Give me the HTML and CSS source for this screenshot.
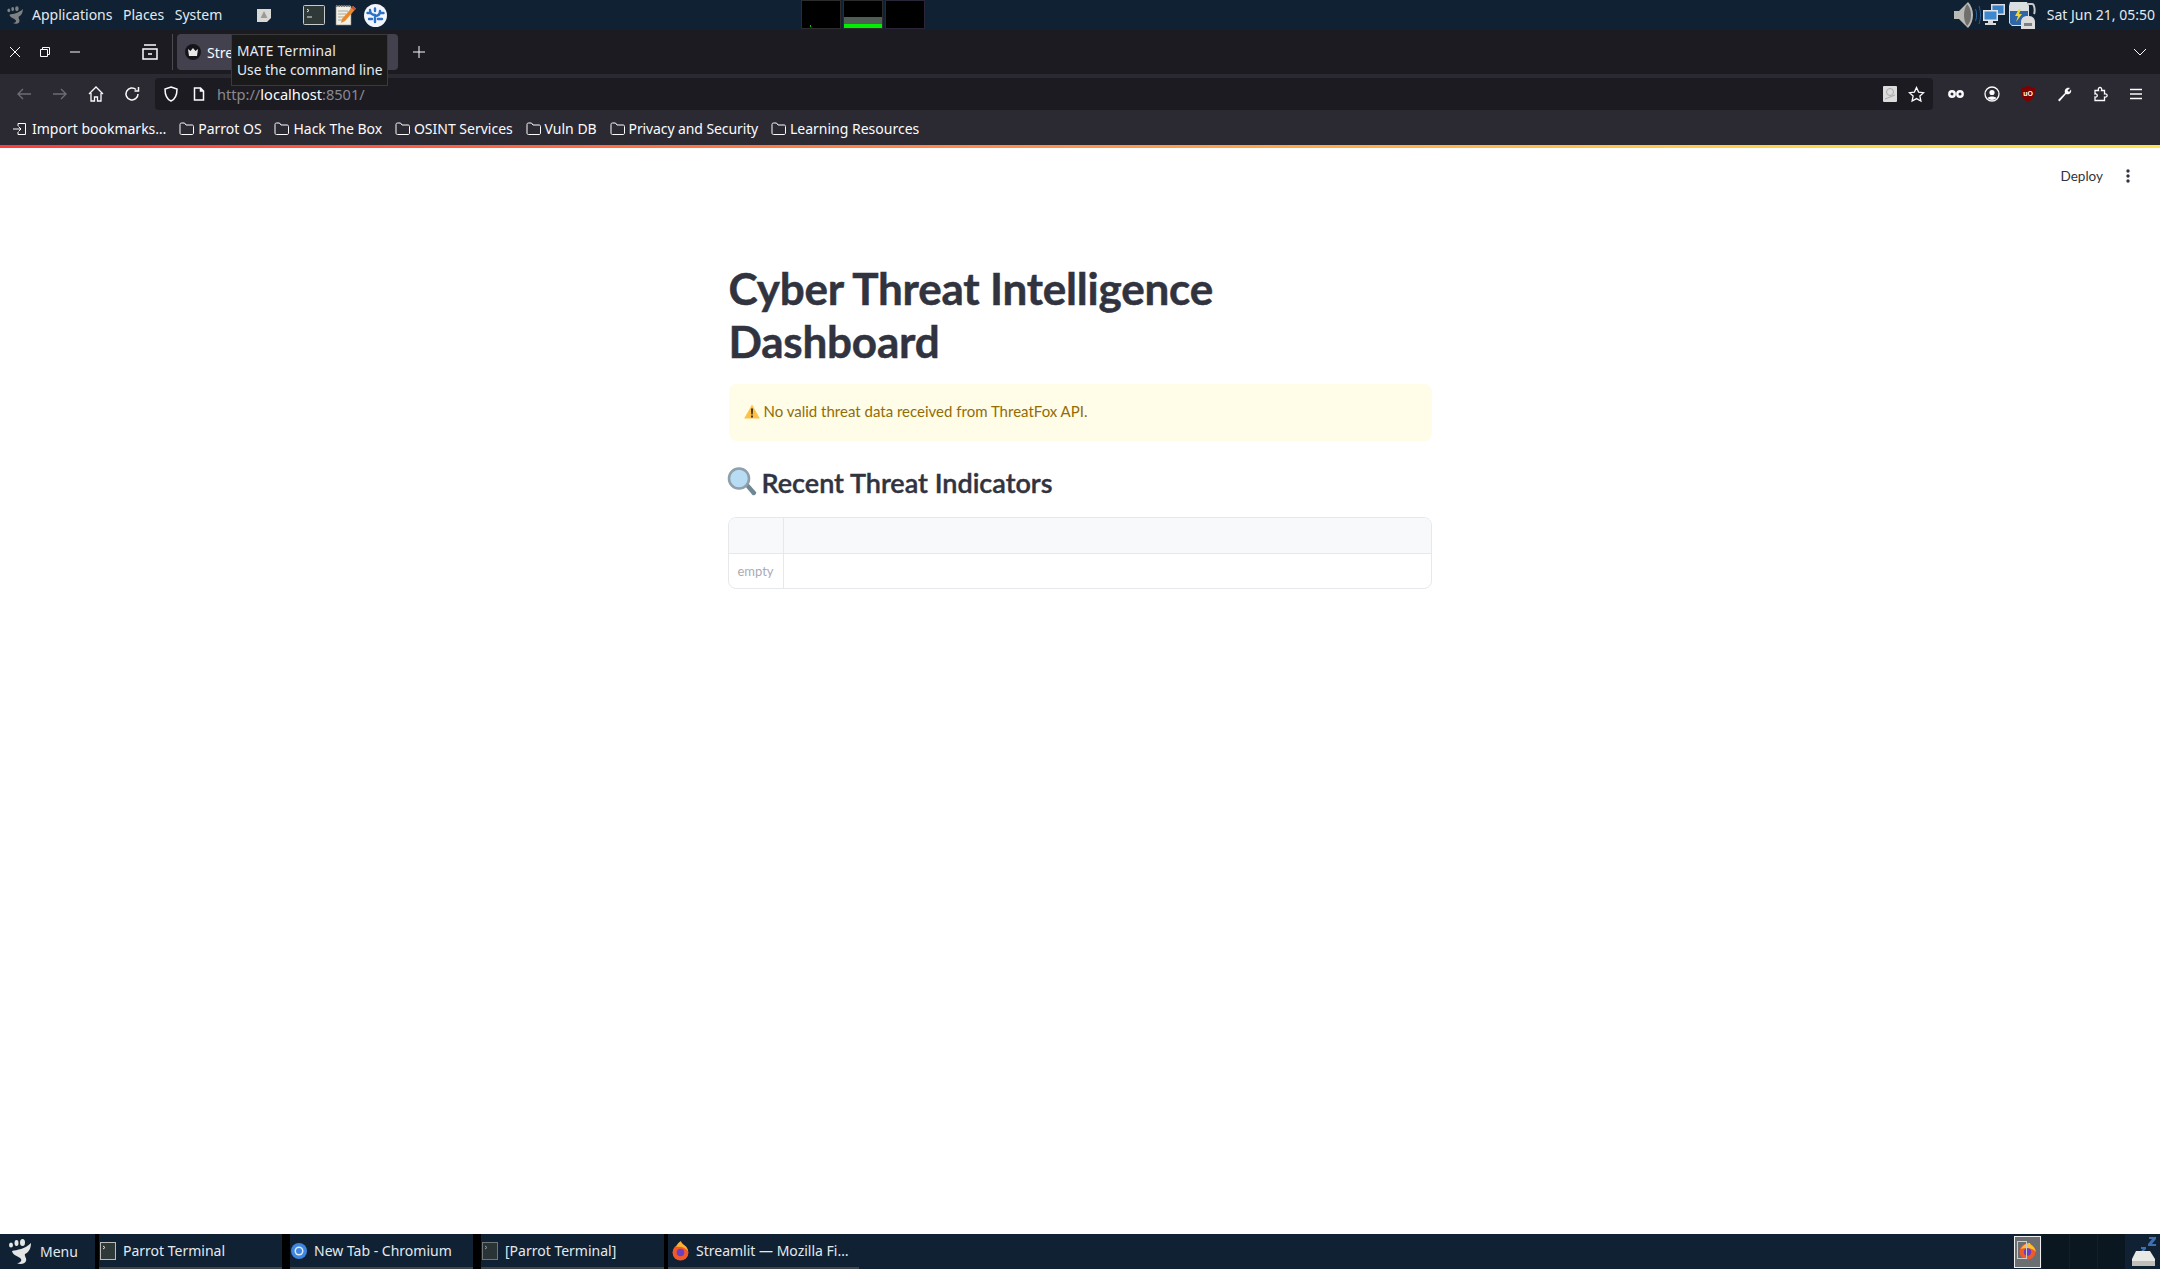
FILE: index.html
```html
<!DOCTYPE html>
<html lang="en">
<head>
<meta charset="utf-8">
<title>Streamlit</title>
<link rel="stylesheet" href="styles.css">
</head>
<body>
<header class="panel">
  <svg class="p-parrot" width="19" height="24" viewBox="0 0 27 27"><g fill="#7d8182"><path d="M5 13C10 12 18 11 24 5c0 5-2 9-6 11-1 2 2 4 1 7-1 3-6 4-9 2 3 0 5-2 4-4-2-3-8-3-9-8z"/><ellipse cx="4" cy="7" rx="2" ry="2.600"/><ellipse cx="9.500" cy="5" rx="2" ry="3"/><ellipse cx="15.500" cy="4.500" rx="2.500" ry="3.500"/></g></svg>
  <nav class="p-menu"><span>Applications</span><span>Places</span><span>System</span></nav>
  <svg class="p-note" width="18" height="18" viewBox="0 0 18 18"><path d="M2 3h14v9l-4 4H2z" fill="#d8d8d4"/><path d="M9 5l3.400 7H5.600z" fill="#9a9a98"/></svg>
  <svg class="p-term" width="22" height="20" viewBox="0 0 22 20"><rect x=".5" y=".5" width="21" height="19" rx="1" fill="#2f3a38" stroke="#c8cbc8"/><path d="M4 4l2 1.500L4 7M4 12h5" stroke="#e8e8e8" fill="none"/></svg>
  <svg class="p-pad" width="22" height="22" viewBox="0 0 22 22"><path d="M2 2h15v19H2z" fill="#f1efe6" stroke="#888" stroke-width=".6"/><path d="M2 2h15" stroke="#777" stroke-width="2" stroke-dasharray="1.500 1"/><path d="M4 7h10M4 10h8M4 13h6M4 16h7" stroke="#a9a9a0"/><path d="M19 2l3 2.500L11 17l-4 2 1-4z" fill="#e8892b"/><path d="M19 2l3 2.500-1.500 2-3-2.500z" fill="#c8503a"/></svg>
  <svg class="p-vs" width="23" height="23" viewBox="0 0 23 23"><circle cx="11.500" cy="11.500" r="11.500" fill="#f2f5fa"/><path d="M11 18V11M11 11C8 11 6 9 6 6M11 12c3 0 5-1.500 5-5M6 9H3.500M16 9h3.500M11 7V4.500M14 15h4M8 15H5" stroke="#2b70c9" stroke-width="2.400" fill="none" stroke-linecap="round"/></svg>
  <div class="monitors">
    <div class="mon"><i class="mon-dot"></i></div>
    <div class="mon mon-mem"><i class="mon-grey"></i><i class="mon-green"></i></div>
    <div class="mon mon-net"></div>
  </div>
  <div class="p-tray">
    <svg width="30" height="28" viewBox="0 0 30 28"><path d="M2 10h5L16 1c3 3 5 8 5 13s-2 10-5 13l-9-9H2z" fill="#b9b9b5"/><path d="M15 3c3 3 4 7 4 11s-1 8-4 11c-2-3-3-7-3-11s1-8 3-11z" fill="#6f6f6d"/><path d="M23.500 8c1.500 4 1.500 8 0 12M27 5c2 6 2 12 0 18" stroke="#2f5f93" fill="none"/></svg>
    <svg width="24" height="24" viewBox="0 0 24 24"><rect x="9" y="1" width="14" height="11" fill="#d5dbe0"/><rect x="10.500" y="2.500" width="11" height="8" fill="#3b7fc4"/><rect x="1" y="7" width="15" height="11" fill="#e3e6e8"/><rect x="2.500" y="8.500" width="12" height="8" fill="#3f88cf"/><path d="M6 18h5v2h3v2H3v-2h3z" fill="#d8d8d8"/></svg>
    <svg class="tray-batt" width="32" height="30" viewBox="0 0 32 30"><path d="M3 2h17l2 4v17l-3 3H5l-3-3V6z" fill="#d9dee2"/><path d="M3 11h18v12l-2 2H5l-2-2z" fill="#2f66a8"/><path d="M21 4h4c3 0 3 8 2 10" stroke="#c8c8c8" stroke-width="2" fill="none"/><path d="M12 9l-4 7h3l-2 6 6-8h-3l2-5z" fill="#f1d63a"/><path d="M14 22c0-4 3-6 6-6h2c3 0 6 2 6 6v7H14z" fill="#dcdcdc"/><rect x="17" y="23" width="8" height="3" fill="#7f7f7f"/></svg>
    <time class="p-clock">Sat Jun 21, 05:50</time>
  </div>
</header>

<section class="tabbar">
  <span class="slot30"><svg width="14" height="14" viewBox="0 0 14 14"><path d="M2 2l10 10M12 2L2 12" class="st"/></svg></span>
  <span class="slot30"><svg width="12" height="12" viewBox="0 0 12 12"><path d="M1.500 3.500h7v7h-7zM3.500 3.500v-2h7v7h-2" class="st"/></svg></span>
  <span class="slot30"><svg width="12" height="12" viewBox="0 0 12 12"><path d="M1 6h10" class="st"/></svg></span>
  <span class="slot30 tabsview"><svg width="18" height="18" viewBox="0 0 18 18"><path d="M3 2h12M2 6h14v10H2zM7 11h4" class="st st15"/></svg></span>
  <span class="sep"></span>
  <div class="tab">
    <span class="favicon"><svg width="10" height="8" viewBox="0 0 10 8"><path d="M0 1l2.500 2L5 0l2.500 3L10 1 9 8H1z" fill="#e8e8e8"/></svg></span>
    <span>Streamlit</span>
  </div>
  <span class="slot30 plus"><svg width="14" height="14" viewBox="0 0 14 14"><path d="M7 1v12M1 7h12" class="st"/></svg></span>
  <span class="slot30 chev"><svg width="14" height="8" viewBox="0 0 14 8"><path d="M1 1l6 6 6-6" class="st"/></svg></span>
</section>

<section class="navbar">
  <span class="slot36"><svg width="16" height="14" viewBox="0 0 16 14"><path d="M15 7H2M7 2L2 7l5 5" class="st dim"/></svg></span>
  <span class="slot36"><svg width="16" height="14" viewBox="0 0 16 14"><path d="M1 7h13M9 2l5 5-5 5" class="st dim"/></svg></span>
  <span class="slot36"><svg width="16" height="16" viewBox="0 0 16 16"><path d="M1 8l7-7 7 7M3 7v8h3.500v-4h3v4H13V7" class="st st13"/></svg></span>
  <span class="slot36"><svg width="16" height="16" viewBox="0 0 16 16"><path d="M14 8a6 6 0 1 1-2-4.500M14.500 1v4h-4" class="st st15"/></svg></span>
  <div class="urlbar">
    <svg class="u-shield" width="16" height="16" viewBox="0 0 16 16"><path d="M8 1l6 2c0 6-1 10-6 12C3 13 2 9 2 3z" class="st st15"/></svg>
    <svg class="u-page" width="12" height="14" viewBox="0 0 12 14"><path d="M1.500 1h6l3 3v9h-9zM7.500 1v3h3" class="st st15"/></svg>
    <span class="u-text"><span class="u-dim">http://</span>localhost<span class="u-dim">:8501/</span></span>
    <svg class="u-disk" width="14" height="16" viewBox="0 0 14 16"><rect width="14" height="16" rx="1" fill="#dcdcdc"/><circle cx="7" cy="6" r="3.500" fill="none" stroke="#a8a8a8"/><path d="M2 13l10-4" stroke="#a8a8a8"/></svg>
    <svg class="u-star" width="17" height="17" viewBox="0 0 17 17"><path d="M8.500 1.500l2.100 4.600 5 .6-3.700 3.400 1 5-4.400-2.500-4.400 2.500 1-5L1.400 6.700l5-.6z" class="st st13"/></svg>
  </div>
  <span class="slot36"><svg width="16" height="8" viewBox="0 0 16 8"><circle cx="4" cy="4" r="2.700" fill="none" stroke="#fbfbfe" stroke-width="2.400"/><circle cx="12" cy="4" r="2.700" fill="none" stroke="#fbfbfe" stroke-width="2.400"/></svg></span>
  <span class="slot36"><svg width="16" height="16" viewBox="0 0 16 16"><circle cx="8" cy="8" r="7" class="st st13"/><circle cx="8" cy="6.500" r="2.600" fill="#fbfbfe"/><path d="M3.500 12c2-2 7-2 9 0-2 2.500-7 2.500-9 0z" fill="#fbfbfe"/></svg></span>
  <span class="slot36"><svg class="ublock" width="16" height="16" viewBox="0 0 16 16"><path d="M8 0l7 2c0 7-1 11-7 14C2 13 1 9 1 2z" fill="#800000"/><text x="8" y="10" class="ub-txt">uO</text></svg></span>
  <span class="slot36"><svg width="16" height="16" viewBox="0 0 16 16"><path d="M2 14l7-7c-1-3 1-6 5-5l-2.500 2.500 1.500 1.500L15 3.500C16 7 13 9 10 8l-6.500 7.500z" fill="#fbfbfe"/></svg></span>
  <span class="slot36"><svg width="16" height="16" viewBox="0 0 16 16"><path d="M1.500 5h3.500c-1.500-4 4.500-4 3 0h3v3.500c3.500-1 3.500 4 0 3V15H1.500v-3.500c3 1 3-4 0-3z" class="st st13" transform="translate(1.500 -.5)"/></svg></span>
  <span class="slot36"><svg width="14" height="12" viewBox="0 0 14 12"><path d="M1 1.500h12M1 6h12M1 10.500h12" class="st st15"/></svg></span>
</section>

<section class="bookmarks">
  <span class="bm bm-import"><svg width="14" height="14" viewBox="0 0 14 14"><path d="M5 4V1.500h7.500v11H5V10M0 7h8M5.500 4.500L8 7l-2.500 2.500" class="st"/></svg>Import bookmarks…</span>
  <span class="bm"><svg class="fold" width="15" height="13" viewBox="0 0 15 13"><path d="M1 11V2.500c0-1 .5-1.500 1.500-1.500h3L7 3h6c1 0 1.500.5 1.500 1.500V11c0 1-.5 1.500-1.500 1.500H2.500C1.500 12.500 1 12 1 11z" class="st"/></svg>Parrot OS</span>
  <span class="bm"><svg class="fold" width="15" height="13" viewBox="0 0 15 13"><path d="M1 11V2.500c0-1 .5-1.500 1.500-1.500h3L7 3h6c1 0 1.500.5 1.500 1.500V11c0 1-.5 1.500-1.500 1.500H2.500C1.500 12.500 1 12 1 11z" class="st"/></svg>Hack The Box</span>
  <span class="bm"><svg class="fold" width="15" height="13" viewBox="0 0 15 13"><path d="M1 11V2.500c0-1 .5-1.500 1.500-1.500h3L7 3h6c1 0 1.500.5 1.500 1.500V11c0 1-.5 1.500-1.500 1.500H2.500C1.500 12.500 1 12 1 11z" class="st"/></svg>OSINT Services</span>
  <span class="bm"><svg class="fold" width="15" height="13" viewBox="0 0 15 13"><path d="M1 11V2.500c0-1 .5-1.500 1.500-1.500h3L7 3h6c1 0 1.500.5 1.500 1.500V11c0 1-.5 1.500-1.500 1.500H2.500C1.500 12.500 1 12 1 11z" class="st"/></svg>Vuln DB</span>
  <span class="bm bm-tight"><svg class="fold" width="15" height="13" viewBox="0 0 15 13"><path d="M1 11V2.500c0-1 .5-1.500 1.500-1.500h3L7 3h6c1 0 1.500.5 1.500 1.500V11c0 1-.5 1.500-1.500 1.500H2.500C1.500 12.500 1 12 1 11z" class="st"/></svg>Privacy and Security</span>
  <span class="bm"><svg class="fold" width="15" height="13" viewBox="0 0 15 13"><path d="M1 11V2.500c0-1 .5-1.500 1.500-1.500h3L7 3h6c1 0 1.500.5 1.500 1.500V11c0 1-.5 1.500-1.500 1.500H2.500C1.500 12.500 1 12 1 11z" class="st"/></svg>Learning Resources</span>
</section>
<div class="rainbow"></div>

<main class="page">
  <div class="app-head">
    <span class="deploy">Deploy</span>
    <svg class="kebab" width="4" height="14" viewBox="0 0 4 14"><circle cx="2" cy="2" r="1.700" fill="#31333f"/><circle cx="2" cy="7" r="1.700" fill="#31333f"/><circle cx="2" cy="12" r="1.700" fill="#31333f"/></svg>
  </div>
  <div class="content">
    <h1 class="title">Cyber Threat Intelligence Dashboard</h1>
    <div class="alert">
      <svg width="16" height="15" viewBox="0 0 16 15"><path d="M8 .5L15.800 14.500H.2z" fill="#fdc14a"/><path d="M7 4.500h2l-.3 6H7.300zM7.100 11.500h1.800v2H7.100z" fill="#3b2a10"/></svg>
      <span>No valid threat data received from ThreatFox API.</span>
    </div>
    <h2 class="subtitle">
      <svg width="30" height="30" viewBox="0 0 30 30"><path d="M18 19l3-3 8 9c1 2-2 4-3.500 3z" fill="#6f8793"/><circle cx="12" cy="11.500" r="10" fill="#b9dcf5" stroke="#8fa0aa" stroke-width="2.600"/></svg>
      <span class="subtitle-text">Recent Threat Indicators</span>
    </h2>
    <div class="table">
      <div class="th idx"></div><div class="th"></div>
      <div class="td idx">empty</div><div class="td"></div>
    </div>
  </div>
</main>

<footer class="dock">
  <div class="d-menu">
    <svg width="27" height="27" viewBox="0 0 27 27"><g fill="#e4e6e6"><path d="M5 13C10 12 18 11 24 5c0 5-2 9-6 11-1 2 2 4 1 7-1 3-6 4-9 2 3 0 5-2 4-4-2-3-8-3-9-8z"/><ellipse cx="4" cy="7" rx="2" ry="2.600"/><ellipse cx="9.500" cy="5" rx="2" ry="3"/><ellipse cx="15.500" cy="4.500" rx="2.500" ry="3.500"/></g></svg>
    <span>Menu</span>
  </div>
  <div class="task">
    <svg width="16" height="18" viewBox="0 0 16 18"><rect x=".5" y=".5" width="15" height="17" fill="#2f3a38" stroke="#b8bbb8"/><path d="M3 4l2 1.500L3 7" stroke="#ddd" fill="none"/></svg>
    <span>Parrot Terminal</span>
  </div>
  <div class="task">
    <svg width="16" height="18" viewBox="0 0 16 18"><circle cx="8" cy="9" r="8" fill="#3f86e0"/><circle cx="8" cy="9" r="4.500" fill="#dce9f8"/><circle cx="8" cy="9" r="3" fill="#3f86e0"/></svg>
    <span>New Tab - Chromium</span>
  </div>
  <div class="task task-third">
    <svg width="16" height="18" viewBox="0 0 16 18"><rect x=".5" y=".5" width="15" height="17" fill="#2a3436" stroke="#6f7678"/><path d="M3 4l2 1.500L3 7" stroke="#999" fill="none"/></svg>
    <span>[Parrot Terminal]</span>
  </div>
  <div class="task task-last">
    <svg width="17" height="20" viewBox="0 0 17 20"><circle cx="8.500" cy="11.500" r="8" fill="#f05a2b"/><path d="M4 6c1-3 3-5 5-6 0 3 6 4 7 10-3-4-8-5-12-4z" fill="#fcb131"/><circle cx="8.500" cy="11.500" r="3.800" fill="#6a3fc4"/></svg>
    <span>Streamlit — Mozilla Fi…</span>
  </div>
  <div class="d-right">
    <div class="thumb">
      <i class="thumb-win"></i>
      <svg width="17" height="17" viewBox="0 0 17 17"><circle cx="8.500" cy="8.500" r="8" fill="#f05a2b"/><path d="M2 6c2-4 6-6 9-6 0 2 5 3 6 9-3-4-10-5-15-3z" fill="#fcc131"/><circle cx="8.500" cy="9" r="3.700" fill="#6a3fc4"/></svg>
    </div>
    <div class="ws"></div><div class="ws"></div><div class="ws"></div>
    <svg class="d-disk" width="26" height="30" viewBox="0 0 26 30"><path d="M18 0h7v2l-4 5h4v2h-8V7l4-5h-3zM10 10h5v2l-3 3h3v2H9v-2l3-3h-2z" fill="#3f6fb0"/><path d="M5 14h14l5 8v6H1v-6z" fill="#e8e8e4"/><rect x="1" y="24" width="23" height="5" fill="#bfc0ba"/></svg>
  </div>
</footer>

<aside class="tooltip"><span class="tip-title">MATE Terminal</span><br>Use the command line</aside>
</body>
</html>
```

FILE: styles.css
```css
* { box-sizing: border-box; }
html, body { margin: 0; height: 100%; }
body {
  width: 2160px;
  height: 1269px;
  overflow: hidden;
  display: flex;
  flex-direction: column;
  position: relative;
  font-family: "Noto Sans", "Liberation Sans", sans-serif;
  background: #fff;
}
svg { display: block; flex: none; }
.st { fill: none; stroke: #fbfbfe; stroke-width: 1; }
.st13 { stroke-width: 1.3; }
.st15 { stroke-width: 1.5; }
.dim { stroke: #6d6c75; stroke-width: 1.4; }

/* top panel */
.panel {
  height: 30px;
  flex: none;
  display: flex;
  align-items: center;
  background: #0f2133;
  color: #e4e9ee;
  font-size: 14px;
}
.p-parrot { margin-left: 6px; }
.p-menu { display: flex; gap: 10.500px; margin: 0 0 1px 7px; }
.p-note { margin-left: 33px; }
.p-term { margin-left: 30px; }
.p-pad { margin-left: 9px; }
.p-vs { margin-left: 8px; }
.monitors { display: flex; gap: 2px; margin-left: 414px; height: 30px; padding-bottom: 1px; }
.mon {
  width: 40px;
  background: #000;
  border: 1px solid #2c2c2c;
  position: relative;
  display: flex;
  flex-direction: column;
  justify-content: flex-end;
}
.mon-net { border-color: #2a2538; }
.mon-dot { position: absolute; left: 8px; bottom: 1px; width: 1px; height: 2px; background: #0c0; }
.mon-grey { height: 7px; background: #4f5f56; }
.mon-green { height: 4px; background: #00ef00; }
.p-tray { margin-left: auto; display: flex; align-items: center; padding-right: 5px; }
.tray-batt { margin-left: 1px; }
.p-clock { margin: 0 0 1px 8px; }

/* tab strip */
.tabbar {
  height: 44px;
  flex: none;
  display: flex;
  align-items: center;
  background: #1c1b22;
  color: #fbfbfe;
  font-size: 14px;
}
.slot30 { width: 30px; height: 30px; display: flex; align-items: center; justify-content: center; }
.tabsview { margin-left: 45px; }
.sep { width: 1px; height: 36px; margin: 0 4px 0 7px; background: #4a4a52; }
.tab {
  width: 221px;
  height: 36px;
  background: #42414d;
  border-radius: 4px;
  display: flex;
  align-items: center;
  padding-left: 8px;
  gap: 6px;
}
.favicon {
  width: 16px;
  height: 16px;
  border-radius: 50%;
  background: #14141a;
  display: flex;
  align-items: center;
  justify-content: center;
}
.plus { margin-left: 6px; }
.chev { margin-left: auto; margin-right: 5px; }

/* navigation */
.navbar {
  height: 36px;
  flex: none;
  display: flex;
  align-items: flex-end;
  background: #2b2a33;
  padding: 0 6px;
}
.slot36 { width: 36px; height: 32px; display: flex; align-items: center; justify-content: center; }
.urlbar {
  flex: 1;
  height: 32px;
  margin: 0 5px;
  background: #1c1b22;
  border-radius: 4px;
  display: flex;
  align-items: center;
  color: #fbfbfe;
  font-size: 14.6px;
}
.u-shield { margin-left: 8px; }
.u-page { margin-left: 14px; }
.u-text { margin-left: 12px; }
.u-dim { color: #8a8990; }
.u-disk { margin-left: auto; }
.u-star { margin: 0 8px 0 11px; }
.ub-txt { font: bold 7px "Liberation Sans", sans-serif; fill: #fff; text-anchor: middle; }

/* bookmarks */
.bookmarks {
  height: 35px;
  flex: none;
  display: flex;
  align-items: center;
  background: #2b2a33;
  color: #fbfbfe;
  font-size: 14px;
  padding: 2px 0 0 13px;
  gap: 12.800px;
}
.bm { display: flex; align-items: center; gap: 4px; white-space: nowrap; }
.bm-import { gap: 5px; }
.bm-tight { letter-spacing: -.1px; }
.rainbow {
  height: 3px;
  flex: none;
  background: linear-gradient(90deg, #ff3b3b 0%, #ff8a4b 45%, #ffd84a 85%, #ffe44a 100%);
}

/* page */
.page { flex: 1; min-height: 0; background: #fff; color: #31333f; font-family: "Lato", "Liberation Sans", sans-serif; }
.app-head {
  height: 56px;
  display: flex;
  align-items: center;
  justify-content: flex-end;
  padding-right: 30px;
  gap: 23px;
}
.deploy { font-size: 13.500px; }
.content { width: 703px; margin: 58px auto 0; }
.title {
  margin: 0;
  font-size: 44px;
  line-height: 53px;
  font-weight: 700;
  width: 560px;
  letter-spacing: -.2px;
  -webkit-text-stroke: .5px #31333f;
}
.alert {
  margin-top: 16px;
  height: 57px;
  border-radius: 8px;
  background: #fffce7;
  color: #926c05;
  font-size: 15px;
  display: flex;
  align-items: center;
  gap: 4px;
  padding: 0 0 3px 15px;
}
.subtitle {
  margin: 25px 0 0 -2px;
  height: 32px;
  display: flex;
  align-items: center;
  gap: 5px;
  font-size: 27px;
  font-weight: 600;
}
.subtitle-text { -webkit-text-stroke: .4px #31333f; }
.table {
  margin: 19px 0 0 -1px;
  height: 72px;
  border: 1px solid #e6e8ec;
  border-radius: 8px;
  overflow: hidden;
  display: grid;
  grid-template-columns: 55px 1fr;
  grid-template-rows: 36px 34px;
}
.th { background: #f8f9fb; border-bottom: 1px solid #e6e8ec; }
.idx { border-right: 1px solid #e6e8ec; }
.td.idx { color: #a9acb6; font-size: 13px; display: flex; align-items: center; justify-content: center; padding-bottom: 1px; }

/* bottom dock */
.dock {
  height: 35px;
  flex: none;
  display: flex;
  background: #000;
  color: #e4e9ee;
  font-size: 14px;
}
.d-menu {
  width: 95px;
  display: flex;
  align-items: center;
  gap: 6px;
  padding-left: 7px;
  background: #0f2133;
  margin-right: 4px;
}
.task {
  width: 183px;
  margin-right: 8px;
  display: flex;
  align-items: center;
  gap: 7px;
  padding-left: 1px;
  background: #0f2133;
  border-bottom: 2px solid #3f4448;
}
.task-third { margin-right: 4px; }
.task-last { width: 191px; margin-right: 0; padding-left: 4px; }
.d-right { flex: 1; display: flex; align-items: center; justify-content: flex-end; background: #0f2133; height: 100%; }
.thumb {
  width: 27px;
  height: 32px;
  background: #6c6f72;
  border: 1px solid #eee;
  position: relative;
  display: flex;
  align-items: center;
  justify-content: center;
}
.thumb-win { position: absolute; left: 2px; top: 4px; width: 10px; height: 18px; border: 1px solid #ccc; }
.ws { width: 28px; height: 100%; background: #0a1620; border-left: 1px solid #11202c; }
.d-disk { margin: 0 3px 0 6px; }

/* tooltip */
.tooltip {
  position: absolute;
  left: 231px;
  top: 34px;
  width: 157px;
  height: 52px;
  background: #1a1a1a;
  border: 1px solid #3a3a3a;
  color: #e6ecf2;
  font-size: 13.8px;
  line-height: 19px;
  padding: 6px 5px;
  white-space: nowrap;
}
.tip-title { letter-spacing: .25px; }
```
